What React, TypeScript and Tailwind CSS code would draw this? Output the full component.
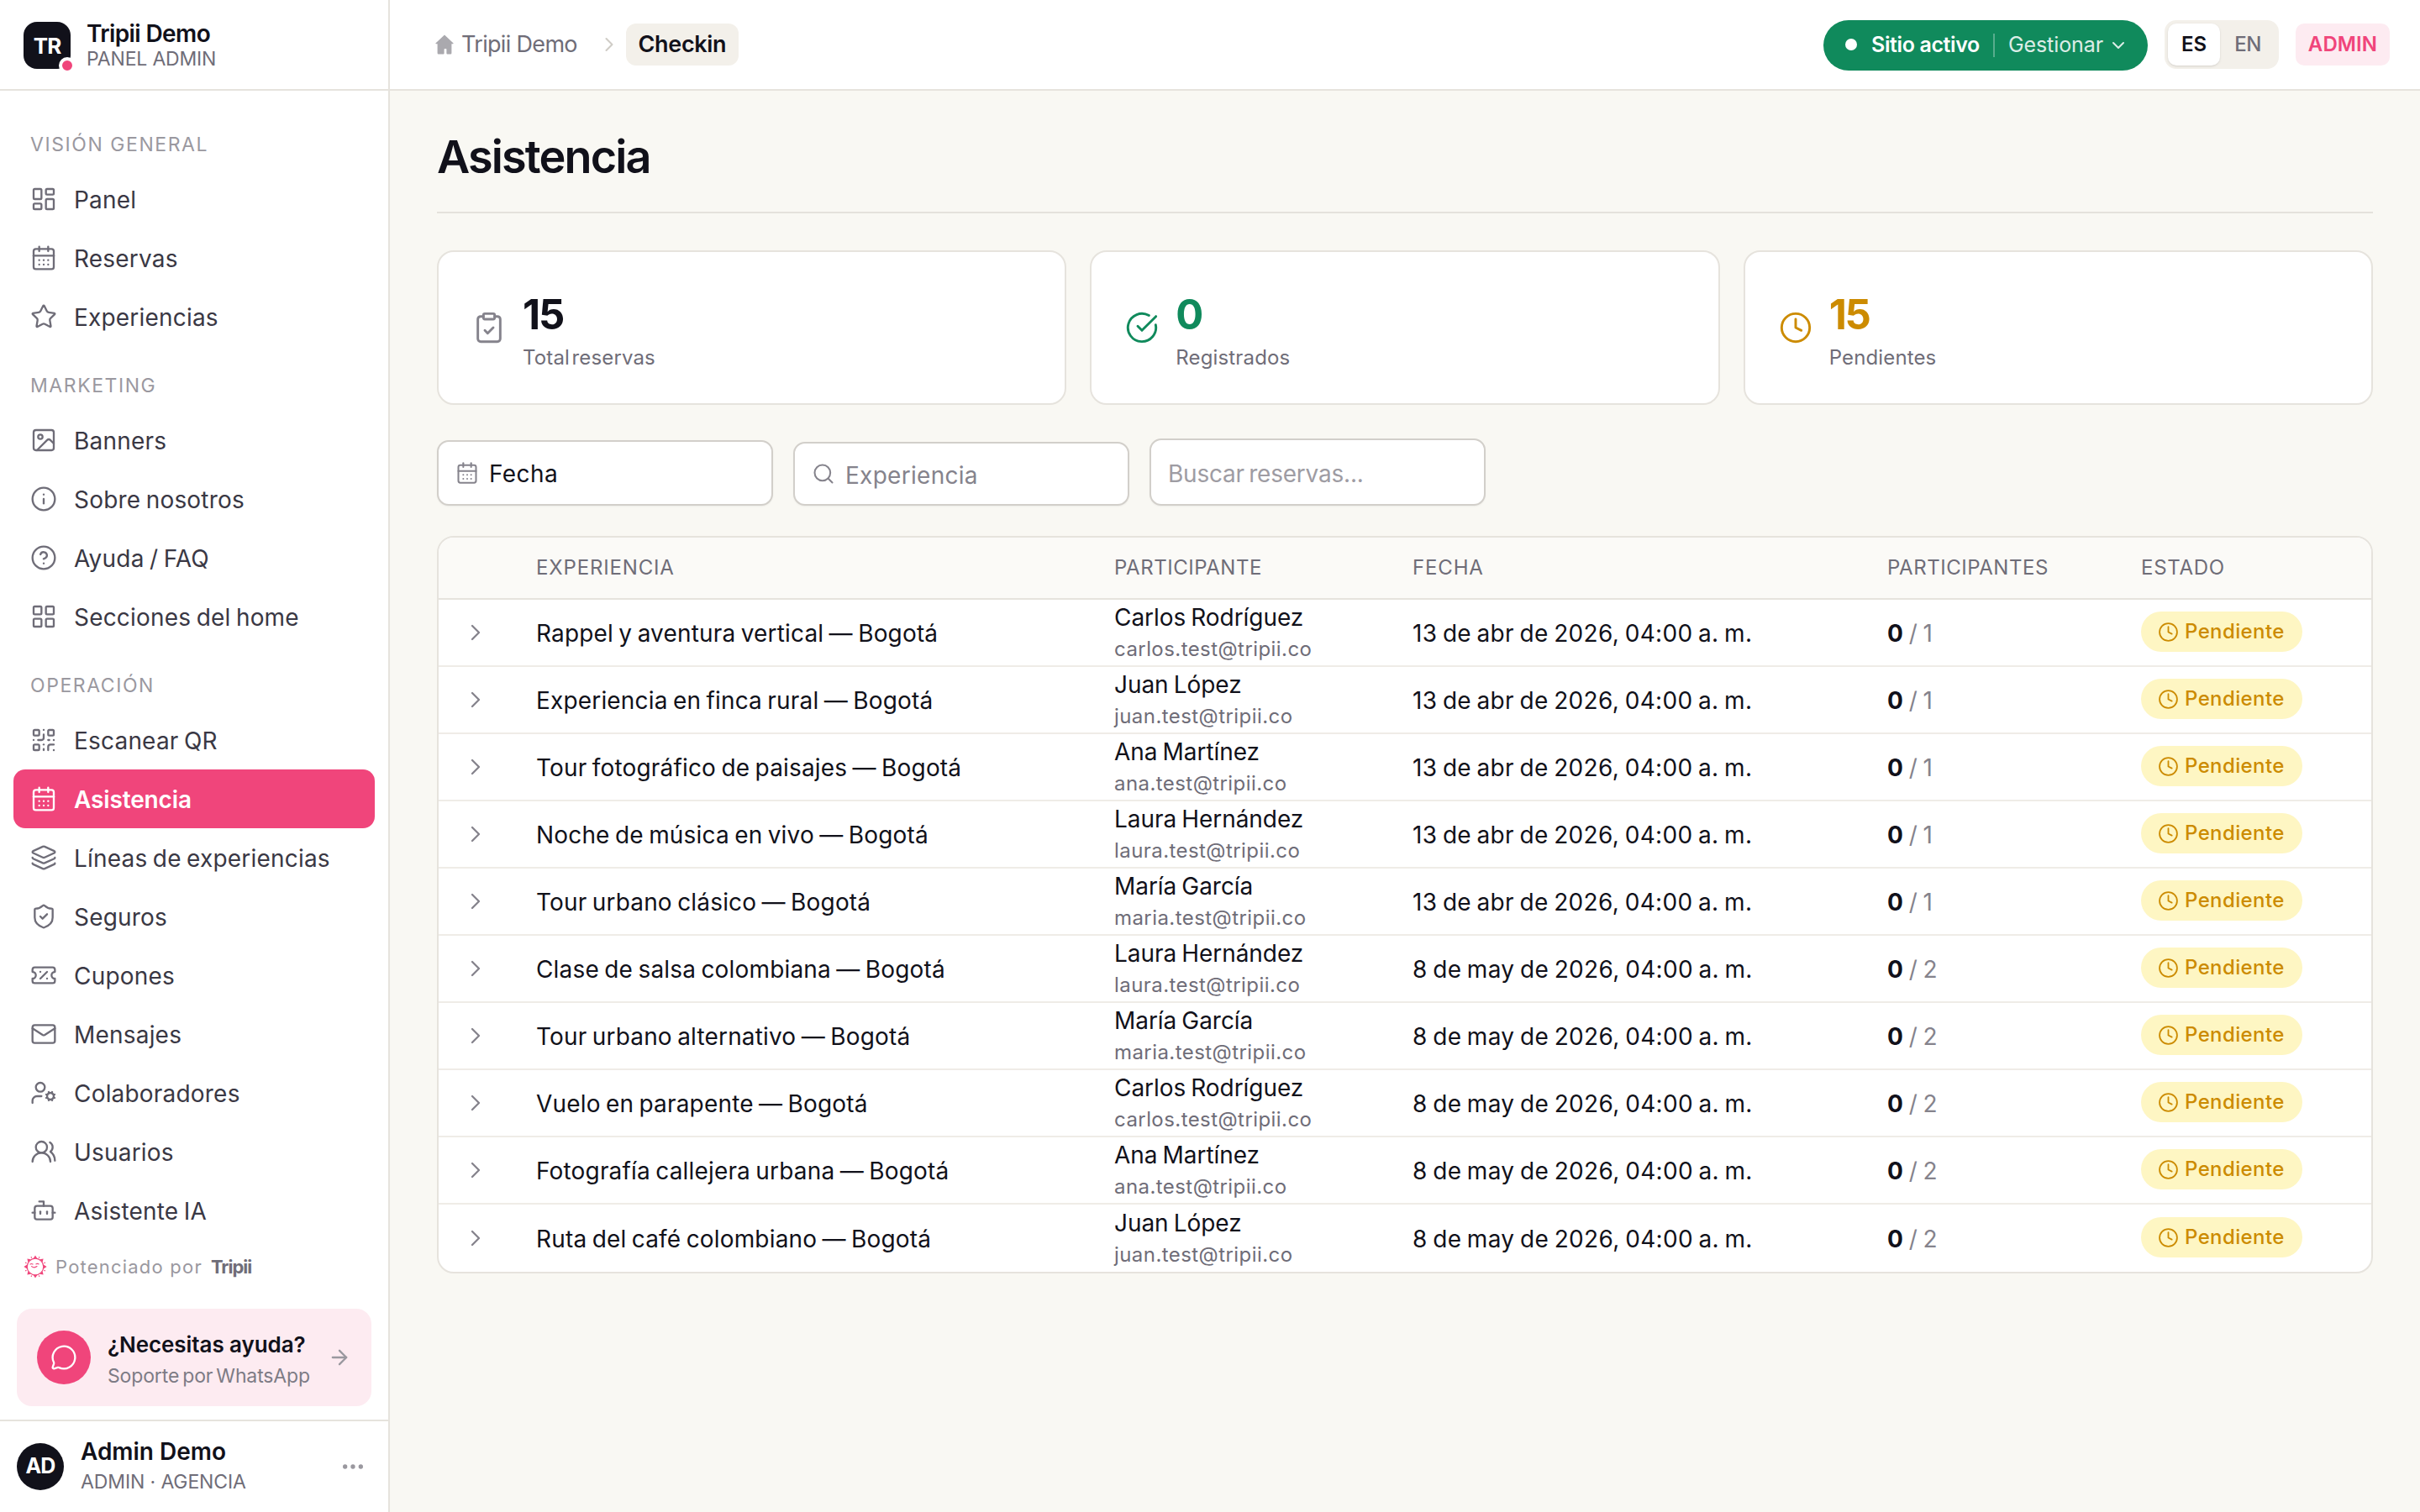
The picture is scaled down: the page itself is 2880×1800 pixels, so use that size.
import React from 'react';
import {
  ArrowRight,
  Bot,
  CalendarDays,
  ChevronDown,
  ChevronRight,
  CircleCheckBig,
  CircleQuestionMark,
  ClipboardCheck,
  Clock,
  Ellipsis,
  Image,
  Info,
  Layers,
  LayoutDashboard,
  LayoutGrid,
  Mail,
  MessageCircle,
  QrCode,
  Search,
  ShieldCheck,
  Star,
  TicketPercent,
  UserCog,
  UsersRound,
  type LucideIcon,
} from 'lucide-react';

interface NavItem {
  label: string;
  icon: LucideIcon;
  active?: boolean;
}

interface NavSection {
  title: string;
  items: NavItem[];
}

interface Booking {
  experience: string;
  name: string;
  email: string;
  date: string;
  total: number;
}

const NAV: NavSection[] = [
  {
    title: 'VISIÓN GENERAL',
    items: [
      { label: 'Panel', icon: LayoutDashboard },
      { label: 'Reservas', icon: CalendarDays },
      { label: 'Experiencias', icon: Star },
    ],
  },
  {
    title: 'MARKETING',
    items: [
      { label: 'Banners', icon: Image },
      { label: 'Sobre nosotros', icon: Info },
      { label: 'Ayuda / FAQ', icon: CircleQuestionMark },
      { label: 'Secciones del home', icon: LayoutGrid },
    ],
  },
  {
    title: 'OPERACIÓN',
    items: [
      { label: 'Escanear QR', icon: QrCode },
      { label: 'Asistencia', icon: CalendarDays, active: true },
      { label: 'Líneas de experiencias', icon: Layers },
      { label: 'Seguros', icon: ShieldCheck },
      { label: 'Cupones', icon: TicketPercent },
      { label: 'Mensajes', icon: Mail },
      { label: 'Colaboradores', icon: UserCog },
      { label: 'Usuarios', icon: UsersRound },
      { label: 'Asistente IA', icon: Bot },
    ],
  },
];

const APRIL = '13 de abr de 2026, 04:00 a. m.';
const MAY = '8 de may de 2026, 04:00 a. m.';

const BOOKINGS: Booking[] = [
  { experience: 'Rappel y aventura vertical — Bogotá', name: 'Carlos Rodríguez', email: 'carlos.test@tripii.co', date: APRIL, total: 1 },
  { experience: 'Experiencia en finca rural — Bogotá', name: 'Juan López', email: 'juan.test@tripii.co', date: APRIL, total: 1 },
  { experience: 'Tour fotográfico de paisajes — Bogotá', name: 'Ana Martínez', email: 'ana.test@tripii.co', date: APRIL, total: 1 },
  { experience: 'Noche de música en vivo — Bogotá', name: 'Laura Hernández', email: 'laura.test@tripii.co', date: APRIL, total: 1 },
  { experience: 'Tour urbano clásico — Bogotá', name: 'María García', email: 'maria.test@tripii.co', date: APRIL, total: 1 },
  { experience: 'Clase de salsa colombiana — Bogotá', name: 'Laura Hernández', email: 'laura.test@tripii.co', date: MAY, total: 2 },
  { experience: 'Tour urbano alternativo — Bogotá', name: 'María García', email: 'maria.test@tripii.co', date: MAY, total: 2 },
  { experience: 'Vuelo en parapente — Bogotá', name: 'Carlos Rodríguez', email: 'carlos.test@tripii.co', date: MAY, total: 2 },
  { experience: 'Fotografía callejera urbana — Bogotá', name: 'Ana Martínez', email: 'ana.test@tripii.co', date: MAY, total: 2 },
  { experience: 'Ruta del café colombiano — Bogotá', name: 'Juan López', email: 'juan.test@tripii.co', date: MAY, total: 2 },
];

const SunLogo: React.FC = () => (
  <svg width="28" height="28" viewBox="0 0 28 28" fill="none" stroke="#f0457b" className="shrink-0">
    <circle cx="14" cy="14" r="9.8" strokeWidth="1.2" />
    {[0, 45, 90, 135, 180, 225, 270, 315].map((a) => (
      <path key={a} d="M11.6 4.2 14 .4l2.4 3.8z" fill="#f0457b" stroke="none" transform={`rotate(${a} 14 14)`} />
    ))}
    {[22.5, 67.5, 112.5, 157.5, 202.5, 247.5, 292.5, 337.5].map((a) => (
      <path key={a} d="M14 1.2v1.4" strokeWidth="1.3" transform={`rotate(${a} 14 14)`} />
    ))}
    <path d="M8 11q1.5-1 3 0M15 10.8q1.5-1 3 0M9.6 13.6q3 2.6 6.400 0" strokeWidth="1.2" strokeLinecap="round" />
  </svg>
);

const HomeIcon: React.FC = () => (
  <svg width="22" height="24" viewBox="0 0 22 24" fill="#aaa9ae" className="shrink-0">
    <path d="M11 .6 21.6 10.4q.3.8-.6.8h-1.6v11q0 1.2-1.200 1.200h-3.800q-1 0-1-1v-4.600q0-.8-.8-.8h-1.200q-.8 0-.8.8v4.600q0 1-1 1H3.800q-1.200 0-1.200-1.200v-11H1q-.9 0-.6-.8z" />
  </svg>
);

const Sidebar: React.FC = () => (
  <aside className="w-[464px] h-full shrink-0 bg-white border-r-2 border-[#e6e3dd] flex flex-col">
    <div className="h-[108px] shrink-0 border-b-2 border-[#e6e3dd] flex items-center px-7 gap-[19px]">
      <div className="relative size-14 mt-[2px] rounded-[16px] bg-[#11111a] text-white flex items-center justify-center text-[26px] font-bold tracking-[-0.04em]">
        TR
        <span className="absolute -right-0.5 -bottom-0.5 translate-x-1 translate-y-1 size-5 rounded-full bg-[#f0457b] border-4 border-white" />
      </div>
      <div className="flex flex-col pt-[2px]">
        <span className="text-[28px] leading-[32px] font-[590] tracking-[-0.022em] text-[#11111a]">Tripii Demo</span>
        <span className="text-[23px] leading-[28px] tracking-[-0.008em] text-[#6f6d78]">PANEL ADMIN</span>
      </div>
    </div>

    <nav className="flex flex-col px-4 pt-[17px]">
      {NAV.map((section) => (
        <div key={section.title} className="flex flex-col">
          <h3 className="h-[77px] pt-[31px] pl-5 text-[23px] leading-[33px] tracking-[0.068em] text-[#9a989f]">{section.title}</h3>
          {section.items.map(({ label, icon: Icon, active }) => (
            <a
              key={label}
              className={`h-[70px] px-5 flex items-center gap-5 rounded-[14px] text-[28px] [word-spacing:-0.06em] ${
                active ? 'bg-[#f0457b] text-white font-[570] tracking-[-0.005em]' : 'text-[#3a3844] tracking-[0.007em]'
              }`}
            >
              <Icon size={32} strokeWidth={1.75} className={active ? 'text-white' : 'text-[#6f6d78]'} />
              <span className="pt-[1px]">{label}</span>
            </a>
          ))}
        </div>
      ))}
    </nav>

    <div className="mt-auto flex items-center px-7 h-7 mb-9">
      <SunLogo />
      <span className="ml-[10px] text-[22px] tracking-[0.055em] text-[#9a989f]">Potenciado por</span>
      <span className="ml-[10px] text-[22px] font-bold tracking-[-0.045em] text-[#6f6d78]">Tripii</span>
    </div>

    <div className="mx-5 mb-4 h-[116px] w-[422px] shrink-0 rounded-[18px] bg-[#fdebf1] flex items-center px-6">
      <div className="size-16 rounded-full bg-[#f0457b] flex items-center justify-center text-white">
        <MessageCircle size={32} strokeWidth={1.75} />
      </div>
      <div className="ml-5 flex flex-col pt-[6px]">
        <span className="text-[26px] leading-[37px] font-[580] tracking-[-0.003em] text-[#11111a]">¿Necesitas ayuda?</span>
        <span className="text-[23px] leading-[38px] tracking-[-0.006em] [word-spacing:-0.1em] text-[#7d7b85]">Soporte por WhatsApp</span>
      </div>
      <ArrowRight size={28} strokeWidth={2} className="ml-auto text-[#9a989f]" />
    </div>

    <div className="h-[110px] shrink-0 border-t-2 border-[#e6e3dd] flex items-center pl-5 pr-[26px]">
      <div className="size-14 rounded-full bg-[#11111a] text-white text-[25px] font-bold tracking-[-0.03em] flex items-center justify-center">AD</div>
      <div className="ml-5 flex flex-col">
        <span className="text-[28px] leading-[35px] font-[580] tracking-[-0.001em] text-[#11111a]">Admin Demo</span>
        <span className="text-[23px] leading-[36px] tracking-[-0.005em] text-[#6f6d78]">ADMIN · AGENCIA</span>
      </div>
      <Ellipsis size={32} strokeWidth={2} className="ml-auto text-[#9a989f]" />
    </div>
  </aside>
);

const Header: React.FC = () => (
  <header className="h-[108px] shrink-0 bg-white border-b-2 border-[#e6e3dd] flex items-center justify-between pl-[54px] pr-9">
    <div className="flex items-center">
      <HomeIcon />
      <span className="ml-[9px] text-[27px] tracking-[-0.025em] text-[#6f6d78]">Tripii Demo</span>
      <ChevronRight size={28} strokeWidth={1.75} className="ml-[24px] text-[#cfccc6]" />
      <span className="ml-[6px] h-[50px] w-[134px] rounded-[12px] bg-[#f3f0ea] flex items-center justify-center text-[27px] font-[570] tracking-[-0.012em] text-[#11111a]">
        Checkin
      </span>
    </div>
    <div className="flex items-center">
      <button className="mt-[2px] h-[60px] w-[386px] rounded-full bg-[#108a5c] text-white flex items-center pl-[26px]">
        <span className="-mt-[2px] size-[14px] rounded-full bg-white" />
        <span className="ml-[17px] text-[25px] font-[560] tracking-[-0.015em]">Sitio activo</span>
        <span className="ml-4 h-7 w-[2px] bg-white/30" />
        <span className="ml-[16px] text-[25px] tracking-[-0.003em] text-white/85">Gestionar</span>
        <ChevronDown size={24} strokeWidth={2} className="ml-[6px] text-white/85" />
      </button>
      <div className="ml-5 h-[58px] w-[136px] rounded-[14px] bg-[#f3f0ea] flex items-center p-1 text-[24px]">
        <span className="h-[50px] w-[62px] rounded-[10px] bg-white shadow-sm flex items-center justify-center font-[570] text-[#11111a]">ES</span>
        <span className="flex-1 text-center font-medium tracking-[-0.02em] text-[#6f6d78]">EN</span>
      </div>
      <span className="ml-5 h-[50px] w-[112px] rounded-[10px] bg-[#fdebf1] flex items-center justify-center text-[24px] font-[560] tracking-[0.004em] text-[#f0457b]">
        ADMIN
      </span>
    </div>
  </header>
);

interface StatCardProps {
  value: number;
  label: string;
  icon: LucideIcon;
  iconClass: string;
  valueClass: string;
}

const StatCard: React.FC<StatCardProps> = ({ value, label, icon: Icon, iconClass, valueClass }) => (
  <div className="flex-1 h-[184px] rounded-[20px] border-2 border-[#e6e3dd] bg-white flex items-center pl-10 gap-5">
    <Icon size={40} strokeWidth={1.75} className={iconClass} />
    <div className="flex flex-col pt-[9px]">
      <span className={`text-[49px] leading-[62px] font-[650] tracking-[-0.045em] ${valueClass}`}>{value}</span>
      <span className="text-[24px] leading-[40px] tracking-[0.006em] [word-spacing:-0.18em] text-[#6f6d78]">{label}</span>
    </div>
  </div>
);

const COLUMNS = 'grid grid-cols-[116px_688px_355px_565px_302px_1fr]';

const BookingRow: React.FC<{ booking: Booking }> = ({ booking }) => (
  <div className={`${COLUMNS} h-20 items-center border-b-2 border-[#efece7] last:border-b-0 text-[28px] tracking-[0.006em] [word-spacing:-0.06em] text-[#11111a]`}>
    <ChevronRight size={32} strokeWidth={1.75} className="ml-7 text-[#85838c]" />
    <span className="pt-[2px]">{booking.experience}</span>
    <div className="flex flex-col pt-[2px]">
      <span className="leading-[37px] tracking-[-0.002em]">{booking.name}</span>
      <span className="text-[24px] leading-[38px] tracking-[0.018em] text-[#6f6d78]">{booking.email}</span>
    </div>
    <span className="pt-[2px] tracking-[0.012em]">{booking.date}</span>
    <span className="pt-[2px] tracking-[-0.01em] [word-spacing:-0.02em]">
      <b className="font-[650]">0</b>
      <span className="text-[#85838c]"> / {booking.total}</span>
    </span>
    <span className="h-12 w-48 -mt-0.5 rounded-full bg-[#fef6c3] flex items-center pl-5 gap-[7px] text-[24px] font-[550] tracking-[0.016em] text-[#cc8b00]">
      <Clock size={25} strokeWidth={1.75} />
      Pendiente
    </span>
  </div>
);

const App: React.FC = () => (
  <div className="w-[2880px] h-[1800px] overflow-hidden flex bg-[#f9f8f3] font-['Inter','Noto_Sans',sans-serif] whitespace-nowrap">
    <Sidebar />
    <div className="flex-1 flex flex-col">
      <Header />
      <main className="px-14 flex flex-col">
        <h1 className="h-[146px] pt-[12px] border-b-2 border-[#e4e2dc] flex items-center text-[54px] font-[590] tracking-[-0.035em] text-[#11111a]">
          Asistencia
        </h1>

        <section className="mt-11 flex gap-7">
          <StatCard value={15} label="Total reservas" icon={ClipboardCheck} iconClass="text-[#85838c]" valueClass="text-[#11111a]" />
          <StatCard value={0} label="Registrados" icon={CircleCheckBig} iconClass="text-[#108a5c]" valueClass="text-[#108a5c]" />
          <StatCard value={15} label="Pendientes" icon={Clock} iconClass="text-[#cc8b00]" valueClass="text-[#cc8b00]" />
        </section>

        <section className="mt-10 flex items-end gap-6 text-[28px]">
          <div className="w-[400px] h-[78px] rounded-[14px] border-2 border-[#d2cfca] bg-white shadow-xs flex items-center pl-5 gap-[12px] tracking-[0.015em] text-[#11111a]">
            <CalendarDays size={28} strokeWidth={1.75} className="text-[#85838c]" />
            <span className="pt-[2px]">Fecha</span>
          </div>
          <div className="w-[400px] h-[76px] rounded-[14px] border-2 border-[#d2cfca] bg-white shadow-xs flex items-center pl-5 gap-[12px] tracking-[0.01em] text-[#85838c]">
            <Search size={28} strokeWidth={1.75} />
            <span className="pt-[3px]">Experiencia</span>
          </div>
          <div className="w-[400px] h-20 rounded-[14px] border-2 border-[#d2cfca] bg-white shadow-xs flex items-center pl-5 pt-[3px] tracking-[-0.008em] [word-spacing:-0.08em] text-[#9e9ca3]">
            Buscar reservas...
          </div>
        </section>

        <section className="mt-9 rounded-[20px] border-2 border-[#e6e3dd] bg-white overflow-hidden">
          <div className={`${COLUMNS} h-[74px] items-center border-b-2 border-[#e6e3dd] bg-[#fbfaf7] text-[24px] tracking-[0.022em] text-[#6f6d78]`}>
            <span />
            <span className="tracking-[0.035em]">EXPERIENCIA</span>
            <span>PARTICIPANTE</span>
            <span className="tracking-[0.035em]">FECHA</span>
            <span>PARTICIPANTES</span>
            <span className="tracking-[0.03em]">ESTADO</span>
          </div>
          {BOOKINGS.map((booking) => (
            <BookingRow key={booking.experience} booking={booking} />
          ))}
        </section>
      </main>
    </div>
  </div>
);

export default App;
